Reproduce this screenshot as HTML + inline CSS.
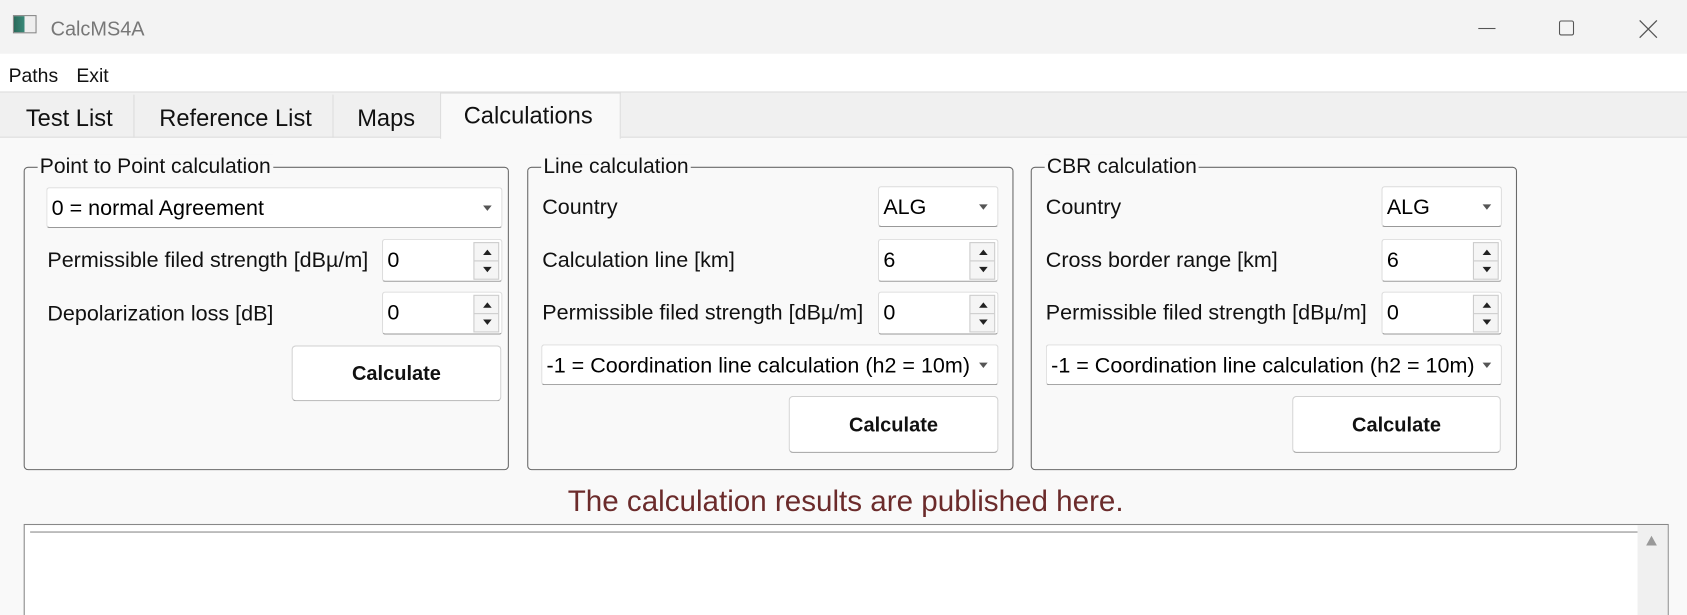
<!DOCTYPE html>
<html><head><meta charset="utf-8"><style>
*{box-sizing:border-box;margin:0;padding:0}
html,body{width:1687px;height:615px;overflow:hidden;background:#fff}
#w{position:absolute;left:0;top:0;width:1568px;height:572px;transform:scale(1.0759);transform-origin:0 0;font-family:"Liberation Sans",sans-serif;background:#f9f9f9;overflow:hidden}
.a{position:absolute}
.t{position:absolute;white-space:nowrap;font-size:20px;color:#111;line-height:22px}
.grp{position:absolute;border:1px solid #6a6a6a;border-radius:4px}
.gt{position:absolute;top:-12px;left:12px;background:#f9f9f9;padding:0 2px;font-size:19.6px;line-height:22px;color:#111;white-space:nowrap}
.box{position:absolute;background:#fff;border:1px solid #ddd;border-bottom:1px solid #999;border-radius:3px}
.box span{position:absolute;left:4px;top:8px;font-size:20px;line-height:22px;white-space:nowrap}
.arr{position:absolute;right:9px;top:16px;width:0;height:0;border-left:4px solid transparent;border-right:4px solid transparent;border-top:5px solid #555}
.spin{position:absolute;right:2px;top:2px;width:24px;height:35px;border:1px solid #ccc;background:#f5f5f5}
.spin:before{content:"";position:absolute;left:8px;top:6px;border-left:4px solid transparent;border-right:4px solid transparent;border-bottom:5px solid #222}
.spin:after{content:"";position:absolute;left:8px;top:22px;border-left:4px solid transparent;border-right:4px solid transparent;border-top:5px solid #222}
.spin i{position:absolute;left:0;right:0;top:16px;border-top:1px solid #ccc}
.btn{position:absolute;background:#fff;border:1px solid #d0d0d0;border-bottom:1px solid #aaa;border-radius:4px;font-weight:bold;font-size:18.6px;text-align:center;color:#111}
</style></head><body><div id="w">
<div class="a" style="left:0;top:0;width:1568px;height:50px;background:#f3f3f3"></div>
<div class="a" style="left:12px;top:14px;width:22px;height:17px;border:1px solid #888;background:linear-gradient(90deg,#2a6a5a 0,#3a8a7a 50%,#eee 50%);"></div>
<div class="t" style="left:47px;top:16px;font-size:18.5px;color:#777">CalcMS4A</div>
<div class="a" style="left:1374px;top:26px;width:16px;border-top:1px solid #555"></div>
<div class="a" style="left:1449px;top:19px;width:14px;height:14px;border:1px solid #555;border-radius:2px"></div>
<svg class="a" style="left:1523px;top:18px" width="18" height="18"><path d="M1 1L17 17M17 1L1 17" stroke="#555" stroke-width="1.2"/></svg>
<div class="a" style="left:0;top:50px;width:1568px;height:36px;background:#fff;border-bottom:1px solid #ddd"></div>
<div class="t" style="left:8px;top:59px;font-size:18px">Paths</div>
<div class="t" style="left:71px;top:59px;font-size:18px">Exit</div>
<div class="a" style="left:0;top:86px;width:1568px;height:42px;background:#f0f0f0;border-bottom:1px solid #ddd"></div>
<div class="a" style="left:3px;top:88px;width:122px;height:40px;border-right:1px solid #ddd"></div>
<div class="a" style="left:125px;top:88px;width:185px;height:40px;border-right:1px solid #ddd"></div>
<div class="a" style="left:409px;top:86px;width:168px;height:43px;background:#f9f9f9;border:1px solid #ddd;border-bottom:none"></div>
<div class="t" style="left:24px;top:97px;font-size:22px;line-height:26px">Test List</div>
<div class="t" style="left:148px;top:97px;font-size:22px;line-height:26px">Reference List</div>
<div class="t" style="left:332px;top:97px;font-size:22px;line-height:26px">Maps</div>
<div class="t" style="left:431px;top:95px;font-size:22px;line-height:26px">Calculations</div>

<div class="grp" style="left:22px;top:155px;width:451px;height:282px"><div class="gt">Point to Point calculation</div></div>
<div class="box" style="left:43px;top:174px;width:424px;height:38px"><span>0 = normal Agreement</span><div class="arr"></div></div>
<div class="t" style="left:44px;top:231px">Permissible filed strength [dBµ/m]</div>
<div class="box" style="left:355px;top:222px;width:112px;height:40px"><span>0</span><div class="spin"><i></i></div></div>
<div class="t" style="left:44px;top:281px">Depolarization loss [dB]</div>
<div class="box" style="left:355px;top:271px;width:112px;height:40px"><span>0</span><div class="spin"><i></i></div></div>
<div class="btn" style="left:271px;top:321px;width:195px;height:52px;line-height:50px">Calculate</div>

<div class="grp" style="left:490px;top:155px;width:452px;height:282px"><div class="gt">Line calculation</div></div>
<div class="t" style="left:504px;top:182px">Country</div>
<div class="box" style="left:816px;top:173px;width:112px;height:38px"><span>ALG</span><div class="arr"></div></div>
<div class="t" style="left:504px;top:231px">Calculation line [km]</div>
<div class="box" style="left:816px;top:222px;width:112px;height:40px"><span>6</span><div class="spin"><i></i></div></div>
<div class="t" style="left:504px;top:280px">Permissible filed strength [dBµ/m]</div>
<div class="box" style="left:816px;top:271px;width:112px;height:40px"><span>0</span><div class="spin"><i></i></div></div>
<div class="box" style="left:503px;top:320px;width:425px;height:38px"><span>-1 = Coordination line calculation (h2 = 10m)</span><div class="arr"></div></div>
<div class="btn" style="left:733px;top:368px;width:195px;height:53px;line-height:51px">Calculate</div>

<div class="grp" style="left:958px;top:155px;width:452px;height:282px"><div class="gt">CBR calculation</div></div>
<div class="t" style="left:972px;top:182px">Country</div>
<div class="box" style="left:1284px;top:173px;width:112px;height:38px"><span>ALG</span><div class="arr"></div></div>
<div class="t" style="left:972px;top:231px">Cross border range [km]</div>
<div class="box" style="left:1284px;top:222px;width:112px;height:40px"><span>6</span><div class="spin"><i></i></div></div>
<div class="t" style="left:972px;top:280px">Permissible filed strength [dBµ/m]</div>
<div class="box" style="left:1284px;top:271px;width:112px;height:40px"><span>0</span><div class="spin"><i></i></div></div>
<div class="box" style="left:972px;top:320px;width:424px;height:38px"><span>-1 = Coordination line calculation (h2 = 10m)</span><div class="arr"></div></div>
<div class="btn" style="left:1201px;top:368px;width:194px;height:53px;line-height:51px">Calculate</div>

<div class="t" style="left:0;width:1572px;text-align:center;top:450px;font-size:27.5px;line-height:32px;color:#6b2b2b">The calculation results are published here.</div>
<div class="a" style="left:22px;top:487px;width:1529px;height:100px;background:#fff;border:1px solid #888"></div>
<div class="a" style="left:28px;top:494px;width:1494px;border-top:1px solid #888"></div>
<div class="a" style="left:1522px;top:488px;width:28px;height:100px;background:#f0f0f0"></div>
<div class="a" style="left:1530px;top:498px;border-left:5px solid transparent;border-right:5px solid transparent;border-bottom:9px solid #999"></div>
</div></body></html>
